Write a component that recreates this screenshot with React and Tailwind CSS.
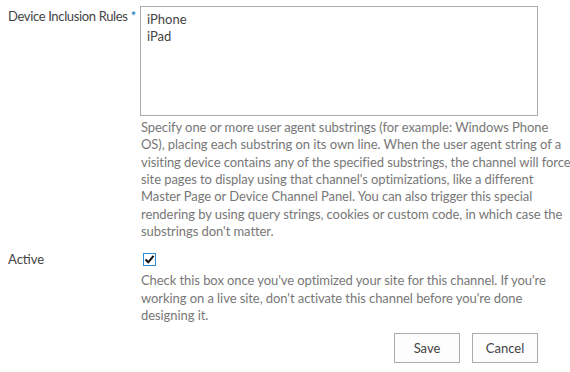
const font = { fontFamily: 'Lato, "Open Sans", sans-serif' };

const helpLines = [
  'Specify one or more user agent substrings (for example: Windows Phone',
  'OS), placing each substring on its own line. When the user agent string of a',
  'visiting device contains any of the specified substrings, the channel will force',
  "site pages to display using that channel's optimizations, like a different",
  'Master Page or Device Channel Panel. You can also trigger this special',
  'rendering by using query strings, cookies or custom code, in which case the',
  "substrings don't matter.",
];

const activeLines = [
  "Check this box once you've optimized your site for this channel. If you're",
  "working on a live site, don't activate this channel before you're done",
  'designing it.',
];

function Help({ lines }) {
  return (
    <div className="text-[13px] leading-[17.33px] text-[#777] tracking-[-0.07px]">
      {lines.map((l) => (
        <div key={l} className="whitespace-nowrap">{l}</div>
      ))}
    </div>
  );
}

export default function App() {
  return (
    <div className="w-[570px] h-[372px] bg-white text-[#444] text-[13px]" style={font}>
      <div className="flex pt-[6px]">
        <div className="w-[140px] pl-2 pt-[2px] leading-[17px] whitespace-nowrap tracking-[-0.35px]">
          Device Inclusion Rules <span className="text-[#0072c6]">*</span>
        </div>
        <div className="w-[398px]">
          <div className="h-[110px] border border-[#ababab] px-[6px] pt-[4px] leading-[17px] text-[#444]">
            <div>iPhone</div>
            <div>iPad</div>
          </div>
          <div className="pt-[3px] pl-px">
            <Help lines={helpLines} />
          </div>
        </div>
      </div>

      <div className="flex mt-[7px]">
        <div className="w-[140px] pl-2 pt-[4px] leading-[17px]">Active</div>
        <div className="w-[398px]">
          <div className="pl-[3px] pt-[6px]">
            <div className="w-[13px] h-[13px] border border-[#2a8dd4] bg-white flex items-center justify-center">
              <svg width="11" height="11" viewBox="0 0 11 11">
                <path d="M1.5 5.5 L4.3 8.3 L9.5 1.8" fill="none" stroke="#111" strokeWidth="2" />
              </svg>
            </div>
          </div>
          <div className="pt-[6px] pl-px">
            <Help lines={activeLines} />
          </div>
        </div>
      </div>

      <div className="flex justify-end gap-[12px] w-[538px] mt-[9px]">
        <button className="w-[66px] h-[30px] border border-[#ababab] bg-[#fdfdfd] text-[#444] text-[13px]">Save</button>
        <button className="w-[66px] h-[30px] border border-[#ababab] bg-[#fdfdfd] text-[#444] text-[13px]">Cancel</button>
      </div>
    </div>
  );
}
